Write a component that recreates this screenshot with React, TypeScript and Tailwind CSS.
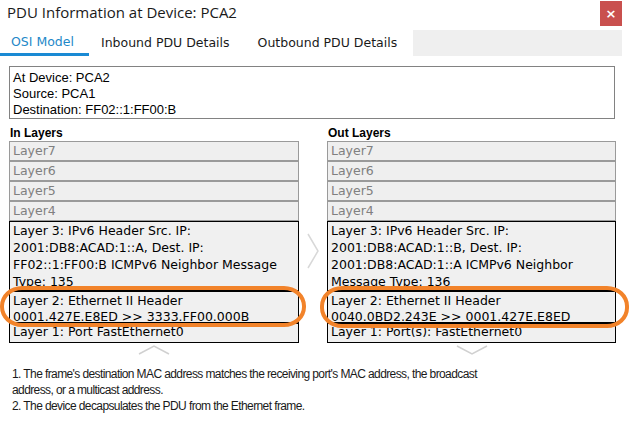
import React from "react";

const verdana = { fontFamily: '"DejaVu Sans", Verdana, sans-serif' };
const arial = { fontFamily: '"Liberation Sans", Arial, sans-serif' };

function Grey({ label }: { label: string }) {
  return (
    <div className="h-[20px] border border-[#9a9a9a] bg-[#efefef] pl-[3px] text-[12.5px] leading-[18px] text-[#808080]" style={verdana}>
      {label}
    </div>
  );
}

function Ring({ className }: { className: string }) {
  return (
    <div className={"pointer-events-none absolute border-[4px] border-[#f2832a] rounded-[22px/20px] " + className} />
  );
}

function Column({
  title,
  l3,
  l2,
  l1,
  ring,
  down,
}: {
  title: string;
  l3: string[];
  l2: string[];
  l1: string;
  ring: string;
  down: boolean;
}) {
  return (
    <div className="flex flex-col">
      <div className="h-[15px] pl-[1px] text-[12px] font-bold leading-[15px] text-black" style={arial}>
        {title}
      </div>
      <Grey label="Layer7" />
      <Grey label="Layer6" />
      <Grey label="Layer5" />
      <Grey label="Layer4" />
      <div className="h-[70px] overflow-hidden border border-black bg-[#f0f0f0] pl-[3px] text-[12.5px] leading-[17px] text-black" style={verdana}>
        {l3.map((t) => (
          <div key={t} className="whitespace-nowrap">{t}</div>
        ))}
      </div>
      <div className="relative h-[32px] border border-black bg-[#f0f0f0] pl-[3px] pt-[1px] text-[12.5px] leading-[16px] text-black" style={verdana}>
        {l2.map((t) => (
          <div key={t} className="whitespace-nowrap">{t}</div>
        ))}
        <Ring className={ring} />
      </div>
      <div className="h-[20px] border border-black bg-[#f0f0f0] pl-[3px] text-[12.5px] leading-[16px] text-black" style={verdana}>
        {l1}
      </div>
      <div className="flex justify-center">
        <svg width="32" height="14" viewBox="0 0 32 14">
          {down ? (
            <polyline points="1,3 16,11 31,3" fill="none" stroke="#d0d0d0" strokeWidth="1.5" />
          ) : (
            <polyline points="1,11 16,3 31,11" fill="none" stroke="#d0d0d0" strokeWidth="1.5" />
          )}
        </svg>
      </div>
    </div>
  );
}

export default function App() {
  return (
    <div className="relative h-[442px] w-[635px] overflow-hidden bg-white">
      {/* title bar */}
      <div className="flex h-[30px] items-start justify-between">
        <div className="pl-[7px] pt-[2px] text-[15px] leading-[20px] text-[#1a1a1a]" style={{ fontFamily: '"Open Sans", "Noto Sans", sans-serif' }}>
          PDU Information at Device: PCA2
        </div>
        <div className="mr-[13px] mt-[1px] flex h-[25px] w-[22px] items-center justify-center bg-[#c9504e] text-[13px] font-bold text-white" style={verdana}>
          ×
        </div>
      </div>
      {/* tabs */}
      <div className="flex h-[26px] items-stretch pr-[13px] text-[12.5px]" style={verdana}>
        <div className="flex w-[89px] items-center border-b-[3px] border-[#1a8ad4] pl-[11px] pt-[2px] text-[#1e88c8]">OSI Model</div>
        <div className="flex items-center pl-[12px] pr-[28px] pt-[1px] text-[#1a1a1a]">Inbound PDU Details</div>
        <div className="flex items-center pt-[1px] text-[#1a1a1a]">Outbound PDU Details</div>
        <div className="ml-[16px] flex-1 bg-[#efefef]" />
      </div>
      {/* info box */}
      <div className="ml-[9px] mr-[20px] mt-[10px] h-[53px] border border-[#828282] pl-[3px] pt-[3px] text-[13px] leading-[16px] text-black" style={arial}>
        <div>At Device: PCA2</div>
        <div>Source: PCA1</div>
        <div>Destination: FF02::1:FF00:B</div>
      </div>
      {/* layers */}
      <div className="ml-[9px] mt-[7px] flex">
        <div className="w-[290px]">
          <Column
            title="In Layers"
            l3={["Layer 3: IPv6 Header Src. IP:", "2001:DB8:ACAD:1::A, Dest. IP:", "FF02::1:FF00:B ICMPv6 Neighbor Message", "Type: 135"]}
            l2={["Layer 2: Ethernet II Header", "0001.427E.E8ED >> 3333.FF00.000B"]}
            l1="Layer 1: Port FastEthernet0"
            ring="left-[-10px] right-[-8px] top-[-6px] bottom-[-5px]"
            down={false}
          />
        </div>
        <div className="flex w-[28px] justify-center pt-[107px]">
          <svg width="14" height="36" viewBox="0 0 14 36">
            <polyline points="2,1 12,18 2,35" fill="none" stroke="#d8d8d8" strokeWidth="1.5" />
          </svg>
        </div>
        <div className="w-[289px]">
          <Column
            title="Out Layers"
            l3={["Layer 3: IPv6 Header Src. IP:", "2001:DB8:ACAD:1::B, Dest. IP:", "2001:DB8:ACAD:1::A ICMPv6 Neighbor", "Message Type: 136"]}
            l2={["Layer 2: Ethernet II Header", "0040.0BD2.243E >> 0001.427E.E8ED"]}
            l1="Layer 1: Port(s): FastEthernet0"
            ring="left-[-8px] right-[-14px] top-[-6px] bottom-[-6px]"
            down={true}
          />
        </div>
      </div>
      {/* notes */}
      <div className="ml-[12px] mt-[9px] text-[12px] leading-[16px] tracking-[-0.6px] text-[#1a1a1a]" style={arial}>
        <div>1. The frame's destination MAC address matches the receiving port's MAC address, the broadcast</div>
        <div>address, or a multicast address.</div>
        <div>2. The device decapsulates the PDU from the Ethernet frame.</div>
      </div>
    </div>
  );
}
